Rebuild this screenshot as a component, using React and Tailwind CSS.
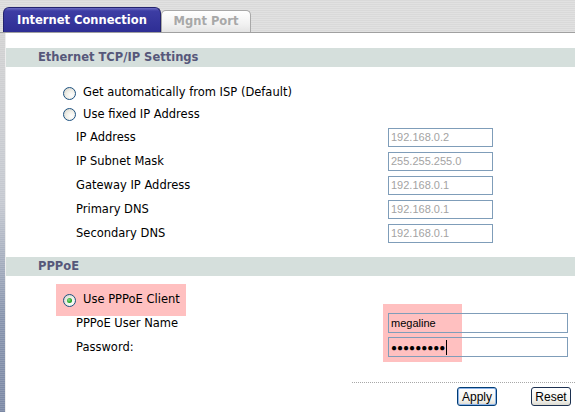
import React from 'react';

const ipRows = [
    { label: 'IP Address', value: '192.168.0.2' },
    { label: 'IP Subnet Mask', value: '255.255.255.0' },
    { label: 'Gateway IP Address', value: '192.168.0.1' },
    { label: 'Primary DNS', value: '192.168.0.1' },
    { label: 'Secondary DNS', value: '192.168.0.1' },
];

// XP style radio button
const Radio = ({ checked }) => (
    <span className="w-[13px] h-[13px] rounded-full border border-[#1c5180] bg-[radial-gradient(circle_at_65%_65%,#ffffff_0%,#f0efe8_45%,#cfcdc4_100%)] flex items-center justify-center shrink-0">
        {checked && (
            <span className="w-[5px] h-[5px] rounded-full bg-[radial-gradient(circle_at_40%_40%,#8be08b_0%,#21a121_60%,#1a7a1a_100%)]" />
        )}
    </span>
);

const SectionHeader = ({ children }) => (
    <div className="h-[19px] bg-[#d5dfdc] flex items-center pl-[32px] pt-[1px] text-[11.5px] font-bold text-[#56577a]">
        {children}
    </div>
);

const App = () => {
    return (
        <div className="relative w-[575px] h-[412px] overflow-hidden bg-white font-['DejaVu_Sans',Verdana,sans-serif] text-[11.5px] text-black">
            {/* Tab bar */}
            <div className="h-[33px] flex items-end pl-[3px] border-b border-[#a0a0a0] bg-[repeating-linear-gradient(to_bottom,#d9d9d9_0px,#d9d9d9_1px,#e1e1e1_1px,#e1e1e1_2px)]">
                <div className="w-[158px] h-[25px] rounded-t-[6px] border border-b-0 border-[#23236e] bg-[linear-gradient(to_bottom,#6b6bc4_0px,#3d3da4_3px,#2e2e94_100%)] flex items-center justify-center pt-[1px] text-white font-bold text-[11.5px]">
                    Internet Connection
                </div>
                <div className="w-[90px] h-[22px] rounded-t-[5px] border border-b-0 border-[#a8a8a8] bg-[linear-gradient(to_bottom,#ffffff_0%,#f2f2f2_60%,#e4e4e4_100%)] flex items-center justify-center text-[#a8a8a8] font-bold text-[11.5px]">
                    Mgnt Port
                </div>
            </div>

            <div className="flex h-[379px]">
                {/* Left frame edge */}
                <div className="w-[6px] border-r border-[#eeeeee] bg-[repeating-linear-gradient(to_bottom,#00000000_0px,#00000000_1px,#ffffff22_1px,#ffffff22_2px),linear-gradient(to_bottom,#d2d2d2_0%,#c4c8d0_45%,#8794ad_75%,#7c89a5_100%)]" />

                <div className="relative flex-1 pt-[15px]">
                    {/* Highlights */}
                    <div className="absolute left-[50px] top-[251px] w-[130px] h-[32px] bg-[#ffc0c0]" />
                    <div className="absolute left-[377px] top-[271px] w-[79px] h-[58px] bg-[#ffc0c0]" />

                    <div className="relative">
                        <SectionHeader>Ethernet TCP/IP Settings</SectionHeader>

                        <div className="pt-[15px] pl-[57px]">
                            <div className="h-[22px] flex items-center gap-[7px]">
                                <Radio />
                                <span>Get automatically from ISP (Default)</span>
                            </div>
                            <div className="h-[21px] flex items-center gap-[7px]">
                                <Radio />
                                <span>Use fixed IP Address</span>
                            </div>
                        </div>

                        <div className="pl-[70px]">
                            {ipRows.map((row) => (
                                <div key={row.label} className="h-[24px] grid grid-cols-[312px_auto] items-center">
                                    <span className="pt-[1px]">{row.label}</span>
                                    <div className="w-[105px] h-[19px] border border-[#7f9db9] flex items-center pl-[2px] font-['Liberation_Sans',Arial,sans-serif] text-[11px] text-[#a3a3a3]">
                                        {row.value}
                                    </div>
                                </div>
                            ))}
                        </div>

                        <div className="mt-[12px]">
                            <SectionHeader>PPPoE</SectionHeader>
                        </div>

                        <div className="pt-[8px] pl-[57px]">
                            <div className="h-[32px] flex items-center gap-[7px]">
                                <Radio checked />
                                <span>Use PPPoE Client</span>
                            </div>
                        </div>

                        <div className="pl-[70px] -mt-[5px]">
                            <div className="h-[24px] grid grid-cols-[312px_auto] items-center">
                                <span className="pt-[1px]">PPPoE User Name</span>
                                <div className="w-[180px] h-[20px] border border-[#7f9db9] flex items-center pl-[2px] font-['Liberation_Sans',Arial,sans-serif] text-[11px]">
                                    megaline
                                </div>
                            </div>
                            <div className="h-[24px] grid grid-cols-[312px_auto] items-center">
                                <span className="pt-[1px]">Password:</span>
                                <div className="w-[180px] h-[20px] border border-[#7f9db9] flex items-center pl-[2px] font-['Liberation_Sans',Arial,sans-serif] text-[10px]">
                                    <span>●●●●●●●●●</span>
                                    <span className="w-px h-[15px] bg-black ml-[1px]" />
                                </div>
                            </div>
                        </div>

                        {/* Actions */}
                        <div className="mt-[23px] ml-[346px] border-t border-dotted border-[#a8a8a8]" />
                        <div className="flex justify-end gap-[34px] pr-[4px] pt-[4px] font-['Liberation_Sans',Arial,sans-serif] text-[12px]">
                            <button className="w-[40px] h-[19px] rounded-[3px] border border-[#003c74] shadow-[inset_0_0_0_1px_#8fb4e8] bg-[linear-gradient(to_bottom,#ffffff_0%,#f3f3ee_70%,#dcdad0_100%)] flex items-center justify-center leading-none">
                                Apply
                            </button>
                            <button className="w-[40px] h-[19px] rounded-[3px] border border-[#1c3050] bg-[linear-gradient(to_bottom,#ffffff_0%,#f3f3ee_70%,#dcdad0_100%)] flex items-center justify-center leading-none">
                                Reset
                            </button>
                        </div>
                    </div>
                </div>
            </div>
        </div>
    );
};

export default App;
